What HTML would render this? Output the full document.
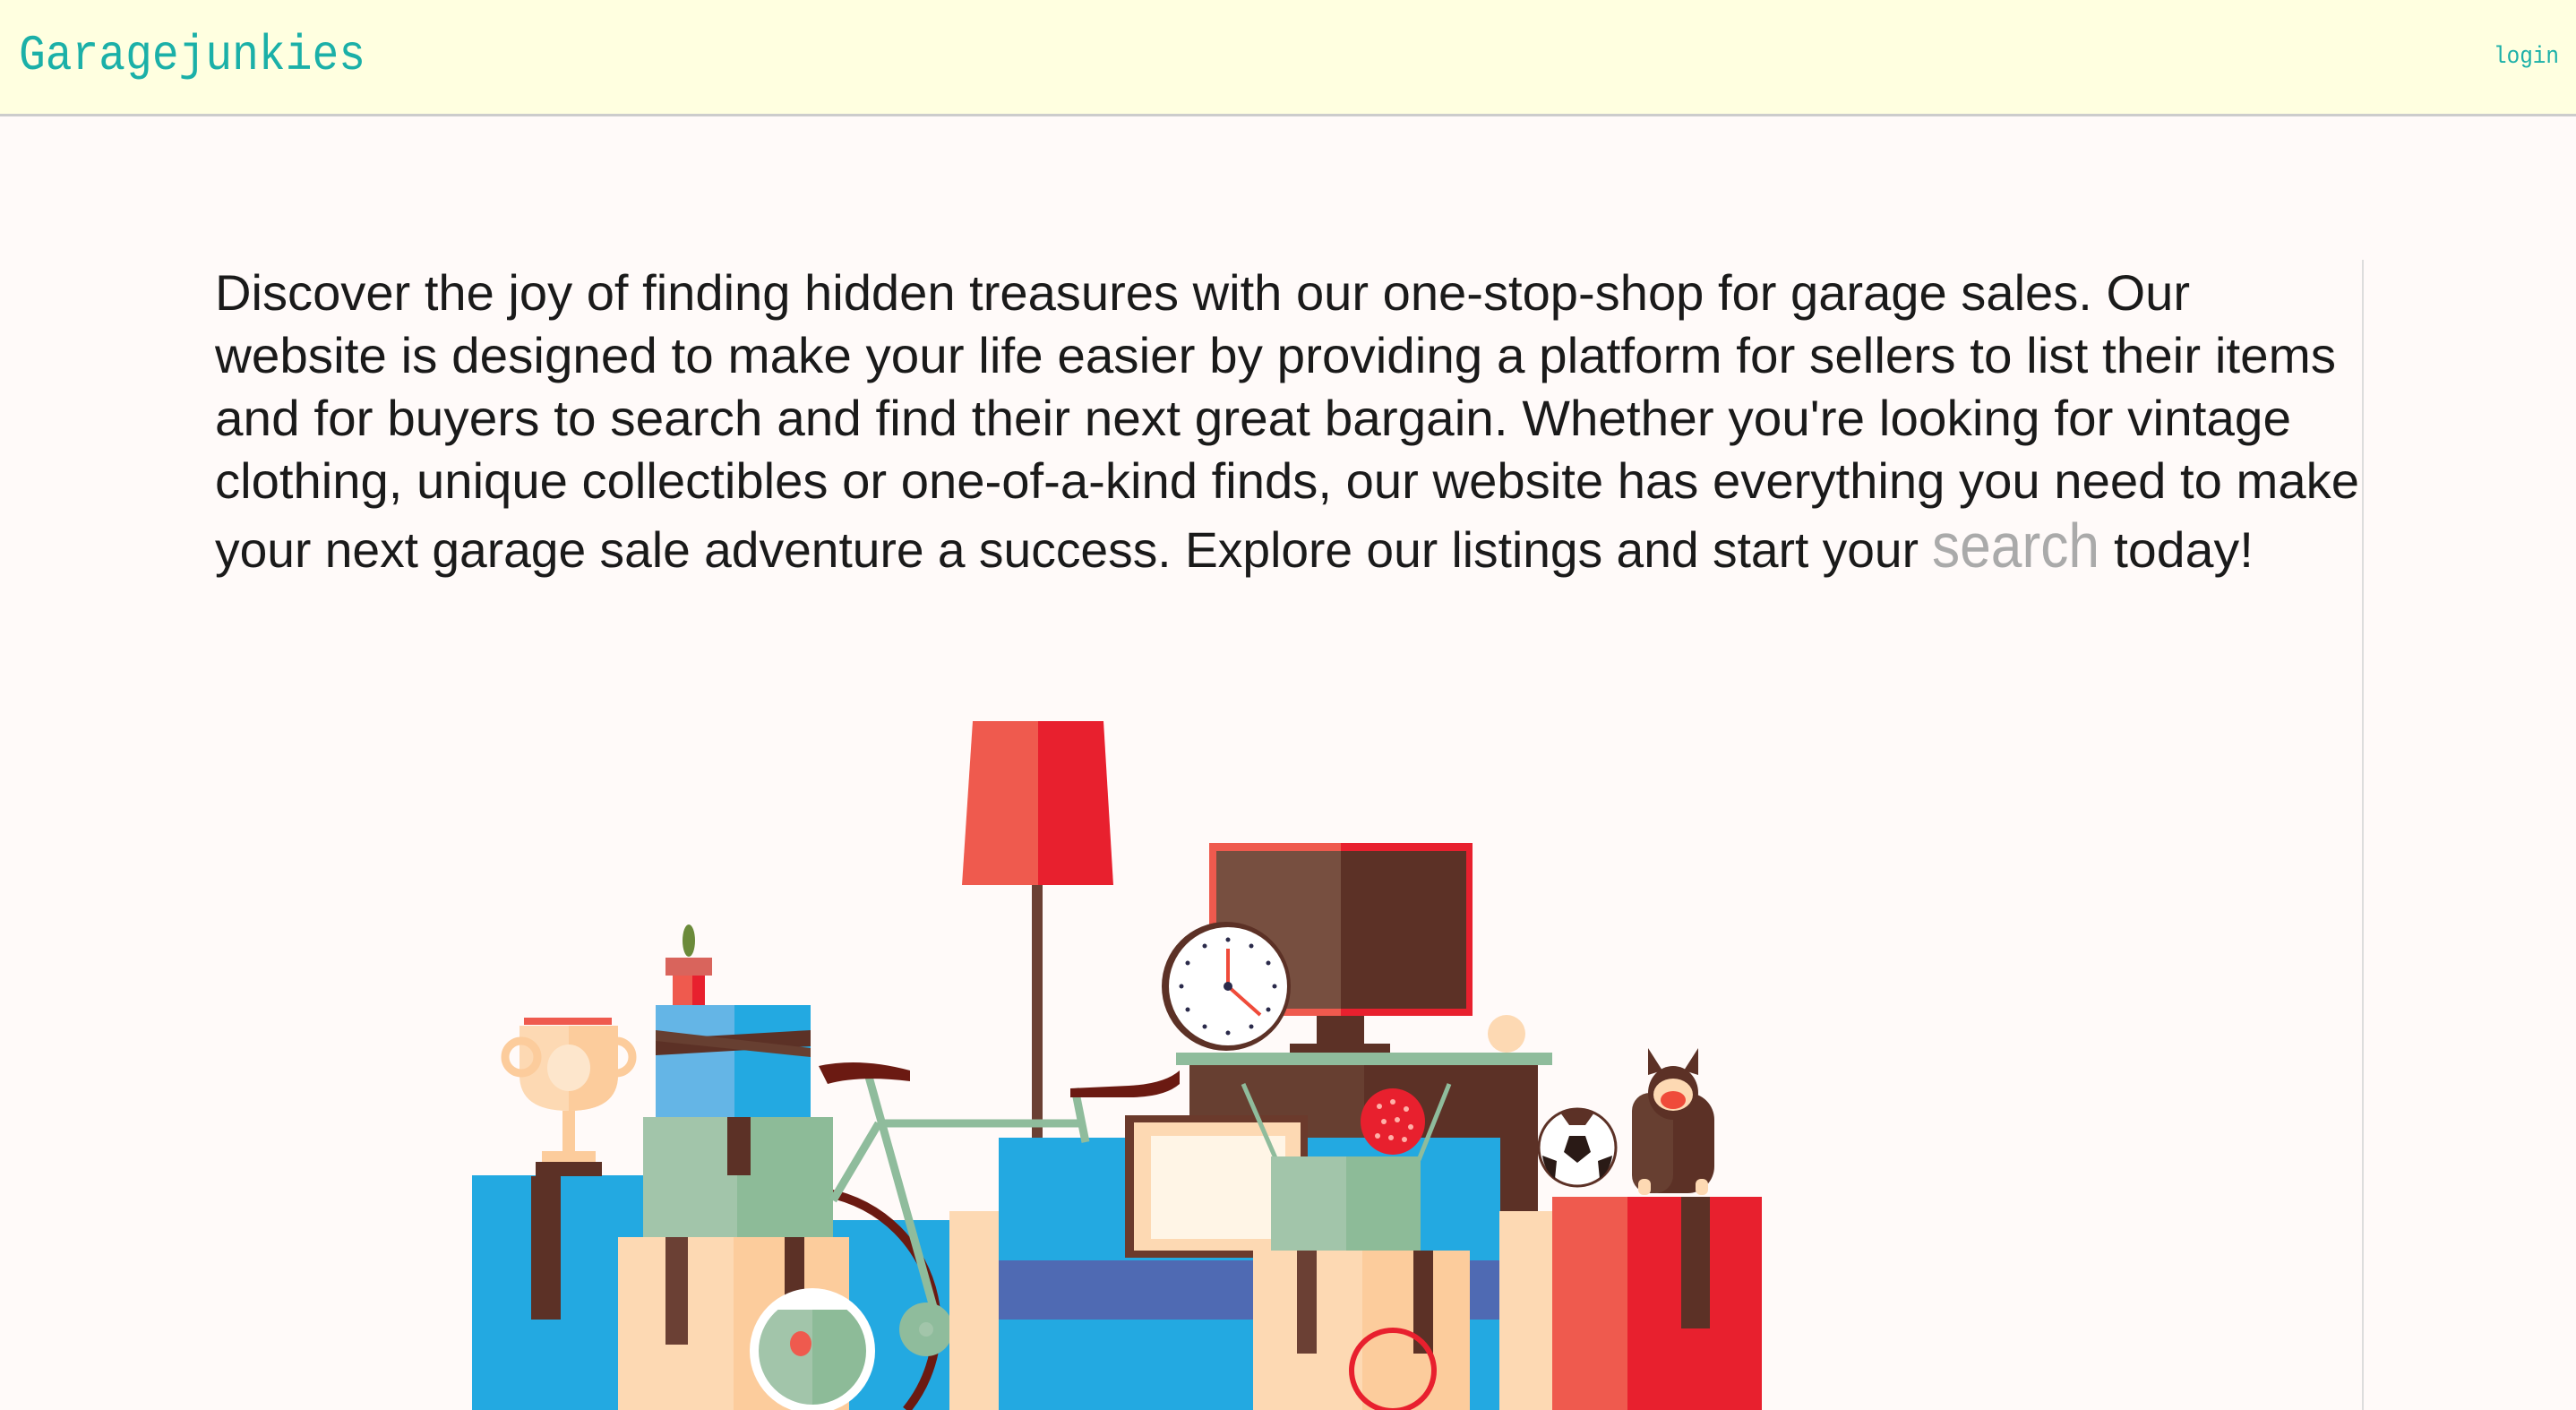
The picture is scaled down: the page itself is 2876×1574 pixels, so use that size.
<!DOCTYPE html>
<html><head><meta charset="utf-8"><style>
html,body{margin:0;padding:0;background:#fffaf9;width:2876px;height:1574px;overflow:hidden}
svg{display:block}
</style></head><body>
<svg width="2876" height="1574" viewBox="0 0 2876 1574" xmlns="http://www.w3.org/2000/svg">
<defs><clipPath id="bowl"><circle cx="907" cy="1508" r="60"/></clipPath></defs>
<rect x="0" y="0" width="2876" height="1574" fill="#fffaf9"/>
<rect x="0" y="0" width="2876" height="127" fill="#ffffe0"/>
<rect x="0" y="127" width="2876" height="3" fill="#cccccc"/>
<text x="21" y="77" font-family="Liberation Mono, monospace" font-size="56" fill="#1bb0a8" textLength="387" lengthAdjust="spacingAndGlyphs">Garagejunkies</text>
<text x="2784" y="70" font-family="Liberation Mono, monospace" font-size="27" fill="#1bb0a8" textLength="73" lengthAdjust="spacingAndGlyphs">login</text>
<rect x="2637" y="290" width="2" height="1284" fill="#dddddd"/>
<g font-family="Liberation Sans, sans-serif" font-size="56" fill="#1a1a1a">
<text x="240" y="346" textLength="2205" lengthAdjust="spacingAndGlyphs">Discover the joy of finding hidden treasures with our one-stop-shop for garage sales. Our</text>
<text x="240" y="416" textLength="2368" lengthAdjust="spacingAndGlyphs">website is designed to make your life easier by providing a platform for sellers to list their items</text>
<text x="240" y="486" textLength="2318" lengthAdjust="spacingAndGlyphs">and for buyers to search and find their next great bargain. Whether you're looking for vintage</text>
<text x="240" y="556" textLength="2394" lengthAdjust="spacingAndGlyphs">clothing, unique collectibles or one-of-a-kind finds, our website has everything you need to make</text>
<text x="240" y="633" textLength="1902" lengthAdjust="spacingAndGlyphs">your next garage sale adventure a success. Explore our listings and start your</text>
<text x="2157" y="633" font-size="70" fill="#aaaaaa" textLength="187" lengthAdjust="spacingAndGlyphs">search</text>
<text x="2360" y="633" textLength="156" lengthAdjust="spacingAndGlyphs">today!</text>
</g>
<polygon points="1086,805 1159,805 1159,988 1074,988" fill="#ef5a4e"/>
<polygon points="1159,805 1232,805 1243,988 1159,988" fill="#e8202e"/>
<rect x="1152" y="988" width="12" height="290" fill="#6b4034"/>
<rect x="1350" y="941" width="147" height="193" fill="#ef5a4e"/>
<rect x="1497" y="941" width="147" height="193" fill="#e8202e"/>
<rect x="1358" y="950" width="139" height="176" fill="#774f40"/>
<rect x="1497" y="950" width="140" height="176" fill="#5c3126"/>
<rect x="1470" y="1134" width="53" height="31" fill="#5c3126"/>
<rect x="1440" y="1165" width="112" height="10" fill="#5c3126"/>
<rect x="1328" y="1189" width="195" height="165" fill="#673f31"/>
<rect x="1523" y="1189" width="194" height="165" fill="#5c3126"/>
<rect x="1313" y="1175" width="420" height="14" fill="#8fbc9c"/>
<circle cx="1369" cy="1101" r="72" fill="#5c3126"/>
<circle cx="1371" cy="1101" r="66" fill="#ffffff"/>
<g fill="#2a2a4a">
<circle cx="1371" cy="1049" r="2.5"/><circle cx="1397" cy="1056" r="2.5"/><circle cx="1416" cy="1075" r="2.5"/><circle cx="1423" cy="1101" r="2.5"/><circle cx="1416" cy="1127" r="2.5"/><circle cx="1397" cy="1146" r="2.5"/><circle cx="1371" cy="1153" r="2.5"/><circle cx="1345" cy="1146" r="2.5"/><circle cx="1326" cy="1127" r="2.5"/><circle cx="1319" cy="1101" r="2.5"/><circle cx="1326" cy="1075" r="2.5"/><circle cx="1345" cy="1056" r="2.5"/>
</g>
<line x1="1371" y1="1101" x2="1371" y2="1059" stroke="#ef4b3a" stroke-width="4"/>
<line x1="1371" y1="1101" x2="1407" y2="1133" stroke="#ef4b3a" stroke-width="4"/>
<circle cx="1371" cy="1101" r="5" fill="#2a2a4a"/>
<circle cx="1682" cy="1154" r="21" fill="#fdd9b3"/>
<circle cx="1761" cy="1281" r="43" fill="#ffffff" stroke="#5c3126" stroke-width="3"/>
<polygon points="1752,1268 1770,1268 1776,1286 1761,1298 1746,1286" fill="#2a1a16"/>
<path d="M1742,1242 Q1761,1236 1780,1242 L1770,1256 L1752,1256 Z" fill="#5c3126"/>
<path d="M1722,1290 L1738,1296 L1736,1316 Q1724,1306 1722,1290 Z" fill="#2a1a16"/>
<path d="M1800,1290 L1784,1296 L1786,1316 Q1798,1306 1800,1290 Z" fill="#2a1a16"/>
<rect x="1733" y="1336" width="84" height="238" fill="#ef5a4e"/>
<rect x="1817" y="1336" width="150" height="238" fill="#e8202e"/>
<rect x="1877" y="1336" width="32" height="147" fill="#5c3126"/>
<rect x="1822" y="1220" width="92" height="112" rx="30" fill="#5c3126"/>
<rect x="1822" y="1220" width="46" height="112" rx="20" fill="#673f31"/>
<ellipse cx="1868" cy="1220" rx="28" ry="30" fill="#5c3126"/>
<polygon points="1840,1200 1840,1170 1856,1195" fill="#5c3126"/>
<polygon points="1896,1200 1896,1170 1880,1195" fill="#5c3126"/>
<ellipse cx="1868" cy="1222" rx="22" ry="18" fill="#fdd9b3"/>
<ellipse cx="1868" cy="1228" rx="14" ry="10" fill="#ef4b3a"/>
<rect x="1829" y="1316" width="14" height="18" rx="6" fill="#fdd9b3"/>
<rect x="1893" y="1316" width="14" height="18" rx="6" fill="#fdd9b3"/>
<rect x="1115" y="1270" width="560" height="304" fill="#23a9e1"/>
<rect x="1115" y="1407" width="560" height="66" fill="#4f6ab3"/>
<rect x="1256" y="1245" width="204" height="159" fill="#6b3a2c"/>
<rect x="1266" y="1253" width="186" height="143" fill="#fdd9b3"/>
<rect x="1285" y="1268" width="150" height="115" fill="#fff5e6"/>
<ellipse cx="1555" cy="1252" rx="36" ry="37" fill="#e8202e"/>
<g fill="#ffb0a8">
<circle cx="1540" cy="1235" r="3"/><circle cx="1555" cy="1230" r="3"/><circle cx="1570" cy="1238" r="3"/><circle cx="1545" cy="1252" r="3"/><circle cx="1560" cy="1250" r="3"/><circle cx="1575" cy="1258" r="3"/><circle cx="1538" cy="1268" r="3"/><circle cx="1553" cy="1270" r="3"/><circle cx="1568" cy="1272" r="3"/>
</g>
<line x1="1388" y1="1210" x2="1425" y2="1295" stroke="#8fbc9c" stroke-width="5"/>
<line x1="1618" y1="1210" x2="1584" y2="1295" stroke="#8fbc9c" stroke-width="5"/>
<rect x="1419" y="1291" width="84" height="108" fill="#a2c5aa"/>
<rect x="1503" y="1291" width="83" height="108" fill="#8dbb98"/>
<rect x="1399" y="1396" width="122" height="178" fill="#fdd9b3"/>
<rect x="1521" y="1396" width="120" height="178" fill="#fccc9c"/>
<rect x="1448" y="1396" width="22" height="115" fill="#6b4034"/>
<rect x="1578" y="1396" width="22" height="115" fill="#5c3126"/>
<rect x="1674" y="1352" width="59" height="222" fill="#fdd9b3"/>
<ellipse cx="1555" cy="1530" rx="46" ry="45" fill="none" stroke="#e8202e" stroke-width="6"/>
<rect x="527" y="1312" width="198" height="262" fill="#23a9e1"/>
<rect x="593" y="1313" width="33" height="160" fill="#5c3126"/>
<rect x="598" y="1297" width="74" height="16" fill="#5c3126"/>
<path d="M580,1145 L690,1145 L690,1200 Q690,1240 635,1240 Q580,1240 580,1200 Z" fill="#fdd9b3"/>
<path d="M635,1145 L690,1145 L690,1200 Q690,1240 635,1240 Z" fill="#fccc9c"/>
<rect x="585" y="1136" width="98" height="8" fill="#ef5a4e"/>
<circle cx="582" cy="1180" r="18" fill="none" stroke="#fccc9c" stroke-width="9"/>
<circle cx="688" cy="1180" r="18" fill="none" stroke="#fccc9c" stroke-width="9"/>
<ellipse cx="635" cy="1192" rx="24" ry="26" fill="#fde6cc"/>
<rect x="628" y="1240" width="14" height="50" fill="#fccc9c"/>
<rect x="605" y="1285" width="60" height="12" fill="#fccc9c"/>
<ellipse cx="769" cy="1050" rx="7" ry="18" fill="#6b8a3a"/>
<rect x="743" y="1069" width="52" height="20" fill="#d9645c"/>
<rect x="751" y="1089" width="22" height="33" fill="#ef5a4e"/>
<rect x="773" y="1089" width="14" height="33" fill="#e8202e"/>
<rect x="732" y="1122" width="88" height="125" fill="#64b5e6"/>
<rect x="820" y="1122" width="85" height="125" fill="#23a9e1"/>
<path d="M732,1160 L905,1150 L905,1168 L732,1178 Z" fill="#5c3126"/>
<path d="M732,1150 L905,1170 L905,1180 L732,1162 Z" fill="#673f31"/>
<rect x="930" y="1362" width="132" height="212" fill="#23a9e1"/>
<path d="M880,1330 A150,150 0 0 1 1012,1574" fill="none" stroke="#6b1a12" stroke-width="10"/>
<rect x="718" y="1247" width="105" height="134" fill="#a2c5aa"/>
<rect x="823" y="1247" width="107" height="134" fill="#8dbb98"/>
<rect x="812" y="1247" width="26" height="65" fill="#5c3126"/>
<rect x="690" y="1381" width="129" height="193" fill="#fdd9b3"/>
<rect x="819" y="1381" width="129" height="193" fill="#fccc9c"/>
<rect x="743" y="1381" width="25" height="120" fill="#6b4034"/>
<rect x="876" y="1381" width="22" height="120" fill="#5c3126"/>
<circle cx="907" cy="1508" r="70" fill="#ffffff"/>
<g clip-path="url(#bowl)">
<rect x="840" y="1462" width="67" height="120" fill="#a2c5aa"/>
<rect x="907" y="1462" width="67" height="120" fill="#8dbb98"/>
</g>
<ellipse cx="894" cy="1500" rx="12" ry="14" fill="#ef5a4e"/>
<g stroke="#8fbc9c" stroke-width="9" fill="none">
<line x1="970" y1="1202" x2="1042" y2="1459"/>
<line x1="981" y1="1254" x2="1205" y2="1254"/>
<line x1="981" y1="1254" x2="930" y2="1340"/>
<line x1="1200" y1="1215" x2="1212" y2="1275"/>
</g>
<circle cx="1034" cy="1484" r="30" fill="#8fbc9c"/>
<circle cx="1034" cy="1484" r="8" fill="#a2c5aa"/>
<path d="M914,1190 Q960,1180 1016,1195 L1016,1207 Q960,1200 924,1210 Z" fill="#6b1a12"/>
<path d="M1195,1215 L1260,1212 Q1300,1210 1317,1195 L1317,1210 Q1300,1225 1260,1225 L1195,1225 Z" fill="#6b1a12"/>
<rect x="1060" y="1352" width="55" height="222" fill="#fdd9b3"/>
</svg>
</body></html>
